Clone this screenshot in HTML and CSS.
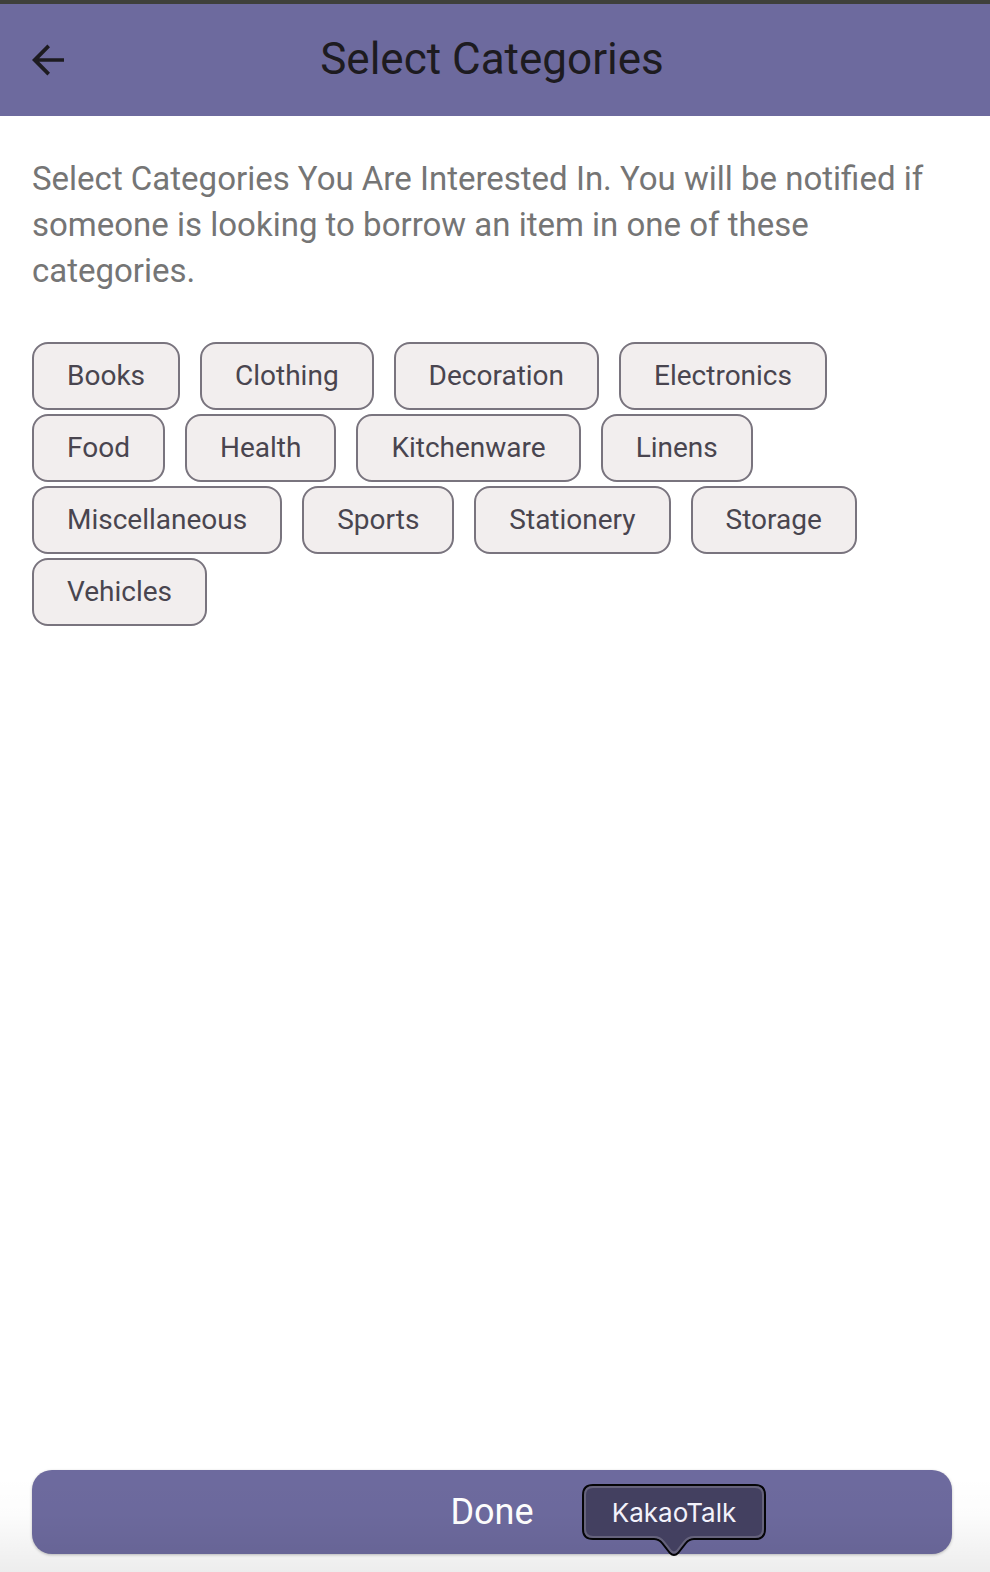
FILE: index.html
```html
<!DOCTYPE html>
<html lang="en">
<head>
<meta charset="utf-8">
<meta name="viewport" content="width=device-width, initial-scale=1">
<title>Select Categories</title>
<link rel="stylesheet" href="styles.css">
</head>
<body>
<div class="screen">
  <header class="app-bar">
    <button class="back" type="button" aria-label="Back">
      <svg class="back-icon" viewBox="0 0 32 32" aria-hidden="true"><path d="M32 14.200H7.200L18 3.200L15.400 0.600L0 16L15.400 31.400L18 28.800L7.200 17.800H32Z"/></svg>
    </button>
    <h1 class="title">Select Categories</h1>
  </header>
  <main class="content">
    <p class="intro">Select Categories You Are Interested In. You will be notified if someone is looking to borrow an item in one of these categories.</p>
    <div class="chips">
      <button class="chip" type="button">Books</button>
      <button class="chip" type="button">Clothing</button>
      <button class="chip" type="button">Decoration</button>
      <button class="chip" type="button">Electronics</button>
      <button class="chip" type="button">Food</button>
      <button class="chip" type="button">Health</button>
      <button class="chip" type="button">Kitchenware</button>
      <button class="chip" type="button">Linens</button>
      <button class="chip" type="button">Miscellaneous</button>
      <button class="chip" type="button">Sports</button>
      <button class="chip" type="button">Stationery</button>
      <button class="chip" type="button">Storage</button>
      <button class="chip" type="button">Vehicles</button>
    </div>
  </main>
  <footer class="actions">
    <button class="done" type="button">Done</button>
    <div class="tooltip" role="tooltip">
      <svg class="tooltip-shape" viewBox="0 0 184 73" aria-hidden="true">
        <path class="tooltip-edge" d="M11 1H173Q183 1 183 11V45Q183 55 173 55H112Q107 55 104 59L96 69Q92 73 88 69L80 59Q77 55 72 55H11Q1 55 1 45V11Q1 1 11 1Z"/>
        <path class="tooltip-rim" d="M11 3H173Q181 3 181 11V45Q181 53 173 53H112Q106 53 102 58L95 67Q92 70 89 67L82 58Q78 53 72 53H11Q3 53 3 45V11Q3 3 11 3Z"/>
      </svg>
      <span class="tooltip-label">KakaoTalk</span>
    </div>
  </footer>
</div>
</body>
</html>
```
FILE: styles.css
```css
* {
  box-sizing: border-box;
}

body {
  margin: 0;
  background: #fff;
  font-family: Roboto, "Liberation Sans", sans-serif;
}

button {
  font-family: inherit;
  cursor: pointer;
}

.screen {
  position: relative;
  display: flex;
  flex-direction: column;
  min-height: 100vh;
  border-top: 4px solid #3f403b;
}

.screen::after {
  content: "";
  position: absolute;
  inset: auto 0 0;
  height: 96px;
  background: linear-gradient(rgba(0, 0, 0, 0), rgba(0, 0, 0, 0.01) 40%, rgba(0, 0, 0, 0.07));
  pointer-events: none;
}

.app-bar {
  display: grid;
  grid-template-columns: 32px 1fr 32px;
  align-items: center;
  height: 112px;
  padding: 0 38px 0 32px;
  background: #6d6a9e;
}

.back {
  display: flex;
  padding: 0;
  border: 0;
  background: none;
}

.back-icon {
  width: 32px;
  height: 32px;
  fill: #1d1b20;
}

.title {
  margin: 0;
  padding-bottom: 2px;
  color: #1d1b20;
  font-size: 44px;
  font-weight: 400;
  line-height: 56px;
  text-align: center;
}

.content {
  flex: 1;
  padding: 40px 38px 40px 32px;
}

.intro {
  margin: 0 0 48px;
  color: #757575;
  font-size: 33px;
  line-height: 46px;
}

.chips {
  display: flex;
  flex-wrap: wrap;
  gap: 4px 20px;
}

.chip {
  height: 68px;
  padding: 0 33px;
  border: 2px solid #79747e;
  border-radius: 16px;
  background: #f2eeee;
  color: #49454f;
  font-size: 28px;
  line-height: 40px;
}

.actions {
  position: relative;
  padding: 0 38px 18px 32px;
}

.done {
  display: block;
  width: 100%;
  height: 84px;
  padding: 0;
  border: 0;
  border-radius: 20px;
  background: #6d6a9e;
  box-shadow: 0 1px 3px rgba(0, 0, 0, 0.25);
  color: #fff;
  font-size: 36px;
}

.tooltip {
  position: absolute;
  top: 14px;
  right: 224px;
  z-index: 1;
  width: 184px;
  height: 56px;
  display: flex;
  align-items: center;
  justify-content: center;
}

.tooltip-shape {
  position: absolute;
  top: 0;
  left: 0;
  width: 184px;
  height: 73px;
}

.tooltip-edge {
  fill: #434060;
  stroke: #050507;
  stroke-width: 2;
}

.tooltip-rim {
  fill: none;
  stroke: #66637c;
  stroke-width: 2;
}

.tooltip-label {
  position: relative;
  color: #f3f2fb;
  font-family: Inter, Roboto, sans-serif;
  font-size: 26px;
}
```
